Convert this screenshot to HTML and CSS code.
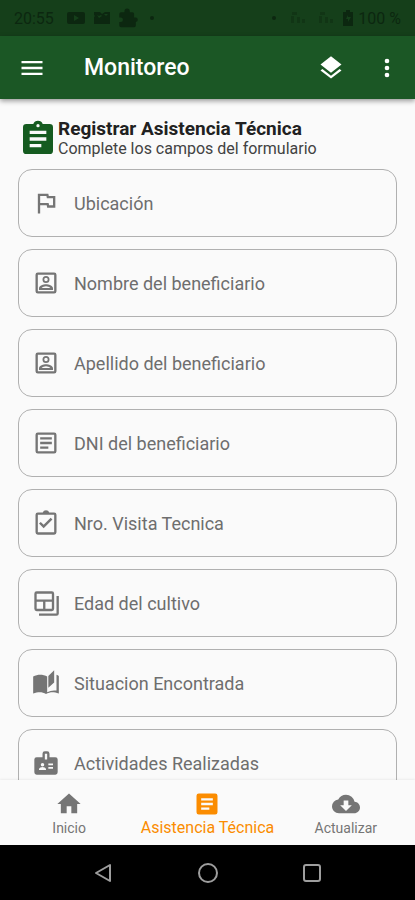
FILE: index.html
```html
<!DOCTYPE html>
<html lang="es">
<head>
  <meta charset="UTF-8" />
  <meta name="viewport" content="width=device-width, initial-scale=1.0"/>
  <title>Monitoreo</title>
  <link rel="stylesheet" href="styles.css">
</head>
<body>

  <!-- Status bar -->
  <div class="status-bar">
    <span class="status-time">20:55</span>
    <svg class="status-icon" viewBox="0 0 20 20"><path fill-rule="evenodd" d="M3 4h14q2 0 2 2v8q0 2-2 2H3q-2 0-2-2V6q0-2 2-2zm5 3v6l5-3z"/></svg>
    <svg class="status-icon" viewBox="0 0 20 20"><path fill-rule="evenodd" d="M2 4h6l2 2 3-2h5v12H2V9l1-1-1-1zm3 3 2 3 3-2-1-1-2 1zM12 6l2 2 2-2z"/></svg>
    <svg class="status-icon" viewBox="1 0 22 23"><path d="M20.500 11H19V7a2 2 0 0 0-2-2h-3V3.500a3 3 0 0 0-6 0V5H4a2 2 0 0 0-2 2v3.800h1.500a2.700 2.700 0 0 1 0 5.400H2V20a2 2 0 0 0 2 2h15a2 2 0 0 0 2-2v-4a2.500 2.500 0 0 0-.5-5z"/></svg>
    <span class="status-dot"></span>
    <div class="status-right">
      <span class="status-dot"></span>
      <svg class="status-signal" viewBox="0 0 20 20"><path d="M4 4h5v3H4zM3 8h3v7H3zM9 9h3v6H9zM14 11h3v4h-3z"/></svg>
      <svg class="status-signal" viewBox="0 0 20 20"><path d="M4 4h5v3H4zM3 8h3v7H3zM9 9h3v6H9zM14 11h3v4h-3z"/></svg>
      <svg class="status-battery" viewBox="0 0 12 18"><path fill-rule="evenodd" d="M4 1h4v2h3v14H1V3h3zm2 5-2 4h2v3l3-5H6z"/></svg>
      <span>100 %</span>
    </div>
  </div>

  <!-- App bar -->
  <header class="app-bar">
    <button type="button" class="icon-button" aria-label="Menú">
      <svg viewBox="0 0 24 24"><path d="M3 18h18v-2H3v2zm0-5h18v-2H3v2zm0-7v2h18V6H3z"/></svg>
    </button>
    <h1>Monitoreo</h1>
    <button type="button" class="icon-button" aria-label="Capas">
      <svg viewBox="0 0 24 24"><path d="M11.990 18.540l-7.370-5.730L3 14.070l9 7 9-7-1.630-1.270-7.380 5.740zM12 16l7.360-5.730L21 9l-9-7-9 7 1.630 1.270L12 16z"/></svg>
    </button>
    <button type="button" class="icon-button" aria-label="Más opciones">
      <svg viewBox="0 0 24 24"><path d="M12 8a2 2 0 1 0 0-4 2 2 0 0 0 0 4zm0 2a2 2 0 1 0 0 4 2 2 0 0 0 0-4zm0 6a2 2 0 1 0 0 4 2 2 0 0 0 0-4z"/></svg>
    </button>
  </header>

  <!-- Form -->
  <main>
    <div class="form-header">
      <svg viewBox="0 0 24 24"><path d="M19 3h-4.180a3 3 0 0 0-5.640 0H5a2 2 0 0 0-2 2v14a2 2 0 0 0 2 2h14a2 2 0 0 0 2-2V5a2 2 0 0 0-2-2zm-7 0a1 1 0 1 1 0 2 1 1 0 0 1 0-2zm2 14H7v-2h7v2zm3-4H7v-2h10v2zm0-4H7V7h10v2z"/></svg>
      <div>
        <h2>Registrar Asistencia Técnica</h2>
        <p>Complete los campos del formulario</p>
      </div>
    </div>

    <form>
      <label class="field">
        <svg viewBox="0 0 24 24"><path d="M12.360 6l.4 2H18v6h-3.360l-.4-2H7V6h5.360M14 4H5v17h2v-7h5.600l.4 2h7V6h-5.600L14 4z"/></svg>
        <input type="text" placeholder="Ubicación" aria-label="Ubicación">
      </label>
      <label class="field">
        <svg viewBox="0 0 24 24"><path fill-rule="evenodd" d="M5 3h14a2 2 0 0 1 2 2v14a2 2 0 0 1-2 2H5a2 2 0 0 1-2-2V5a2 2 0 0 1 2-2zm0 2v14h14V5zm7 1a3 3 0 1 1 0 6 3 3 0 0 1 0-6zm0 1.500a1.500 1.500 0 1 0 0 3 1.500 1.500 0 0 0 0-3zM6 18v-1.500c0-2.500 4-3.500 6-3.500s6 1 6 3.500V18zm2.300-1.700h7.400c-.7-.9-2.400-1.500-3.700-1.500s-3 .6-3.700 1.500z"/></svg>
        <input type="text" placeholder="Nombre del beneficiario" aria-label="Nombre del beneficiario">
      </label>
      <label class="field">
        <svg viewBox="0 0 24 24"><path fill-rule="evenodd" d="M5 3h14a2 2 0 0 1 2 2v14a2 2 0 0 1-2 2H5a2 2 0 0 1-2-2V5a2 2 0 0 1 2-2zm0 2v14h14V5zm7 1a3 3 0 1 1 0 6 3 3 0 0 1 0-6zm0 1.500a1.500 1.500 0 1 0 0 3 1.500 1.500 0 0 0 0-3zM6 18v-1.500c0-2.500 4-3.500 6-3.500s6 1 6 3.500V18zm2.300-1.700h7.400c-.7-.9-2.400-1.500-3.700-1.500s-3 .6-3.700 1.500z"/></svg>
        <input type="text" placeholder="Apellido del beneficiario" aria-label="Apellido del beneficiario">
      </label>
      <label class="field">
        <svg viewBox="0 0 24 24"><path fill-rule="evenodd" d="M5 3h14a2 2 0 0 1 2 2v14a2 2 0 0 1-2 2H5a2 2 0 0 1-2-2V5a2 2 0 0 1 2-2zm0 2v14h14V5zM7 7h10v2H7zm0 4h10v2H7zm0 4h7v2H7z"/></svg>
        <input type="text" placeholder="DNI del beneficiario" aria-label="DNI del beneficiario">
      </label>
      <label class="field">
        <svg viewBox="0 0 24 24"><path fill-rule="evenodd" d="M19 3h-4.180a3 3 0 0 0-5.640 0H5a2 2 0 0 0-2 2v15a2 2 0 0 0 2 2h14a2 2 0 0 0 2-2V5a2 2 0 0 0-2-2zM5 5h14v15H5zM17.500 9 16 7.600l-6 6-2.500-2.500L6 12.500l4 4z"/></svg>
        <input type="text" placeholder="Nro. Visita Tecnica" aria-label="Nro. Visita Tecnica">
      </label>
      <label class="field">
        <svg viewBox="0 0 24 24"><path fill-rule="evenodd" d="M4 2h13a2 2 0 0 1 2 2v13a2 2 0 0 1-2 2H4a2 2 0 0 1-2-2V4a2 2 0 0 1 2-2zm0 2v5h13V4zm0 7v6h5.500v-6zm7.500 0v6H17v-6zM21 6h2v15a2 2 0 0 1-2 2H6v-2h15z"/></svg>
        <input type="text" placeholder="Edad del cultivo" aria-label="Edad del cultivo">
      </label>
      <label class="field">
        <svg viewBox="0 0 24 24"><path d="M21 5v13.500a12 12 0 0 0-8 1.500V6.500C11.500 5.400 9 5 7 5s-4 .4-6 1.500v14.600c2-.8 4-1.100 5.500-1.100 2 0 4 .4 5.500 1.500 1.500-1 4-1.500 5.500-1.500s3.500.3 5.500 1.100V6c-.6-.4-1.200-.7-2-1zM19 1l-5 5v10l5-4.500z"/></svg>
        <input type="text" placeholder="Situacion Encontrada" aria-label="Situacion Encontrada">
      </label>
      <label class="field">
        <svg viewBox="0 0 24 24"><path fill-rule="evenodd" d="M20 7h-5V4a2 2 0 0 0-2-2h-2a2 2 0 0 0-2 2v3H4a2 2 0 0 0-2 2v11a2 2 0 0 0 2 2h16a2 2 0 0 0 2-2V9a2 2 0 0 0-2-2zM11 4h2v5h-2zM9 12a1.500 1.500 0 1 1 0 3 1.500 1.500 0 0 1 0-3zm3 6H6v-.7c0-1.200 2-1.800 3-1.800s3 .6 3 1.800zm2-5.500h4V14h-4zm0 3h4V17h-4z"/></svg>
        <input type="text" placeholder="Actividades Realizadas" aria-label="Actividades Realizadas">
      </label>
    </form>
  </main>

  <!-- Bottom navigation -->
  <nav class="bottom-nav">
    <a href="#">
      <svg viewBox="0 0 24 24"><path d="M10 20v-6h4v6h5v-8h3L12 3 2 12h3v8z"/></svg>
      <span>Inicio</span>
    </a>
    <a href="#" class="active">
      <svg viewBox="0 0 24 24"><path d="M19 3H5a2 2 0 0 0-2 2v14a2 2 0 0 0 2 2h14a2 2 0 0 0 2-2V5a2 2 0 0 0-2-2zm-5 14H7v-2h7v2zm3-4H7v-2h10v2zm0-4H7V7h10v2z"/></svg>
      <span>Asistencia Técnica</span>
    </a>
    <a href="#">
      <svg viewBox="0 0 24 24"><path d="M19.350 10.040A7.490 7.490 0 0 0 12 4C9.110 4 6.600 5.640 5.350 8.040A5.994 5.994 0 0 0 0 14c0 3.310 2.690 6 6 6h13c2.760 0 5-2.240 5-5 0-2.640-2.050-4.780-4.650-4.960zM17 13l-5 5-5-5h3V9h4v4h3z"/></svg>
      <span>Actualizar</span>
    </a>
  </nav>

  <!-- System buttons -->
  <div class="system-bar">
    <button type="button" aria-label="Atrás"><svg viewBox="0 0 24 24"><path d="M18 4v16L4 12z"/></svg></button>
    <button type="button" aria-label="Inicio"><svg viewBox="0 0 24 24"><circle cx="12" cy="12" r="9"/></svg></button>
    <button type="button" aria-label="Recientes"><svg viewBox="0 0 24 24"><rect x="4" y="4" width="16" height="16" rx="2"/></svg></button>
  </div>

</body>
</html>
```
FILE: styles.css
```css
* {
  margin: 0;
  padding: 0;
  box-sizing: border-box;
  font-family: Roboto, 'Liberation Sans', sans-serif;
}

body {
  display: flex;
  flex-direction: column;
  height: 100vh;
  overflow: hidden;
  background-color: #fafafa;
  color: #212121;
}

svg {
  display: block;
  flex-shrink: 0;
  fill: currentColor;
}

button {
  border: none;
  background: none;
  color: inherit;
  cursor: pointer;
}

/* Status Bar */
.status-bar {
  display: flex;
  align-items: center;
  gap: 6px;
  height: 36px;
  flex-shrink: 0;
  padding: 0 14px;
  background-color: #153f1a;
  color: #0c2710;
  font-size: 16px;
}

.status-time {
  margin-right: 6px;
}

.status-icon {
  width: 20px;
  height: 20px;
}

.status-dot {
  width: 4px;
  height: 4px;
  margin: 0 6px;
  border-radius: 50%;
  background-color: currentColor;
}

.status-right {
  display: flex;
  align-items: center;
  gap: 4px;
  margin-left: auto;
}

.status-signal {
  width: 24px;
  height: 20px;
  opacity: 0.4;
}

.status-battery {
  width: 12px;
  height: 18px;
}

/* App Bar */
.app-bar {
  display: flex;
  align-items: center;
  height: 63px;
  flex-shrink: 0;
  padding-left: 4px;
  background-color: #1b5725;
  color: #fff;
  box-shadow: 0 2px 5px rgba(0,0,0,0.4);
  z-index: 1;
}

.app-bar h1 {
  flex: 1;
  margin-left: 24px;
  font-size: 23px;
  line-height: 28px;
  font-weight: 500;
}

.icon-button {
  display: flex;
  align-items: center;
  justify-content: center;
  width: 56px;
  height: 56px;
}

.icon-button svg {
  width: 28px;
  height: 28px;
}

/* Form */
main {
  flex: 1;
  min-height: 0;
  overflow: hidden;
  padding: 20px 18px 0;
}

.form-header {
  display: flex;
  align-items: center;
  height: 40px;
  margin-bottom: 10px;
}

.form-header svg {
  width: 40px;
  height: 40px;
  color: #155b20;
}

.form-header h2 {
  font-size: 19px;
  line-height: 20px;
  font-weight: 700;
  white-space: nowrap;
}

.form-header p {
  font-size: 16px;
  line-height: 20px;
  color: #424242;
}

form {
  display: flex;
  flex-direction: column;
  gap: 12px;
}

.field {
  display: flex;
  align-items: center;
  gap: 14px;
  height: 68px;
  flex-shrink: 0;
  padding: 0 13px;
  border: 1px solid #b0b0b0;
  border-radius: 14px;
  color: #757575;
}

.field svg {
  width: 28px;
  height: 28px;
}

.field input {
  flex: 1;
  min-width: 0;
  border: none;
  outline: none;
  background: none;
  font-size: 18px;
  color: #212121;
}

.field input::placeholder {
  color: #6e6e6e;
  opacity: 1;
}

/* Bottom Navigation */
.bottom-nav {
  display: grid;
  grid-template-columns: repeat(3, 1fr);
  height: 65px;
  flex-shrink: 0;
  background-color: #fafafa;
  box-shadow: 0 -1px 2px rgba(0,0,0,0.06);
}

.bottom-nav a {
  display: flex;
  flex-direction: column;
  align-items: center;
  padding-top: 10px;
  color: #757575;
  font-size: 14px;
  line-height: 20px;
  text-decoration: none;
  white-space: nowrap;
}

.bottom-nav svg {
  width: 28px;
  height: 28px;
}

.bottom-nav .active {
  color: #fb8c00;
  font-size: 16px;
}

/* System Bar */
.system-bar {
  display: flex;
  align-items: center;
  justify-content: center;
  gap: 80px;
  height: 55px;
  flex-shrink: 0;
  background-color: #000;
}

.system-bar svg {
  width: 24px;
  height: 24px;
  fill: none;
  stroke: #9e9e9e;
  stroke-width: 2;
  stroke-linejoin: round;
}
```
